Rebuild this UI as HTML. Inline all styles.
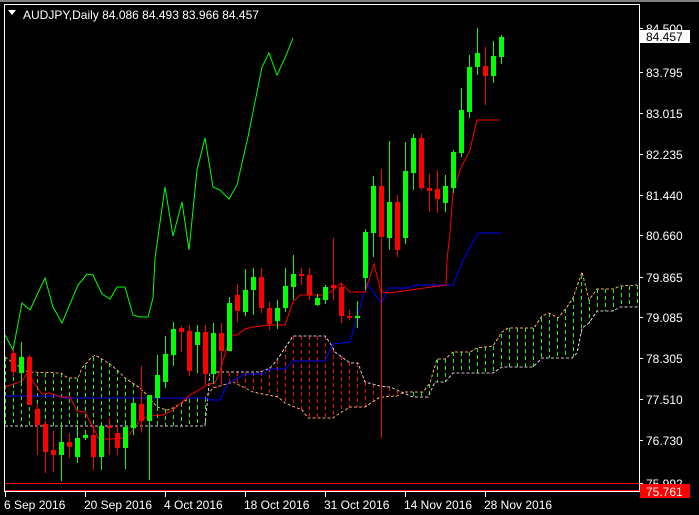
<!DOCTYPE html>
<html><head><meta charset="utf-8"><style>
html,body{margin:0;padding:0;background:#000;width:699px;height:515px;overflow:hidden}
svg{display:block}
text{font-family:"Liberation Sans",sans-serif;font-size:12px;fill:#fff}
</style></head><body>
<svg id="s" width="699" height="515" xmlns="http://www.w3.org/2000/svg">
<rect x="0" y="0" width="699" height="2" fill="#808080"/>
<g id="cloud" shape-rendering="crispEdges"></g>
<g id="lines"></g>
<g id="candles" shape-rendering="crispEdges"></g>
<line x1="5" y1="483.5" x2="639" y2="483.5" stroke="#ff0000"/>
<line x1="5" y1="490.5" x2="639" y2="490.5" stroke="#ff0000"/>
<rect x="4.5" y="4.5" width="635" height="487" fill="none" stroke="#fff"/>
<g id="axis"></g>
<polygon points="8,10 16,10 12,15" fill="#fff"/>
<text x="23" y="19">AUDJPY,Daily  84.086 84.493 83.966 84.457</text>
</svg>
<script>
var NS="http://www.w3.org/2000/svg";
function el(p,t,a){var e=document.createElementNS(NS,t);for(var k in a)e.setAttribute(k,a[k]);document.getElementById(p).appendChild(e);return e;}
function pl(p,pts,c,dash){var a={points:pts.map(function(q){return q[0]+","+q[1]}).join(" "),fill:"none",stroke:c,"stroke-width":1};if(dash)a["stroke-dasharray"]=dash;el(p,"polyline",a);}
function interp(pts,x){if(x<=pts[0][0])return pts[0][1];for(var i=1;i<pts.length;i++){if(x<=pts[i][0]){var a=pts[i-1],b=pts[i];return a[1]+(b[1]-a[1])*(x-a[0])/(b[0]-a[0]||1);}}return pts[pts.length-1][1];}
var A=[[5,357],[12,362],[28,372],[61,373],[68,378],[78,378],[82,368],[90,359],[95,355],[110,364],[117,370],[125,378],[140,388],[147,395],[157,407],[167,410],[173,408],[190,398],[205,398],[213,388],[233,382],[245,388],[253,392],[278,397],[285,403],[302,410],[308,418],[333,418],[340,413],[350,407],[365,407],[380,397],[397,396],[405,392],[423,392],[430,383],[437,359],[445,359],[453,352],[470,352],[477,348],[493,346],[502,332],[508,328],[534,328],[542,316],[549,313],[558,318],[567,307],[573,298],[582,272],[589,300],[597,289],[613,289],[621,286],[637,285]];
var B=[[5,426],[205,426],[210,372],[260,372],[270,368],[277,360],[287,345],[293,336],[325,336],[330,343],[335,352],[350,363],[358,363],[365,382],[380,386],[390,387],[413,397],[428,397],[435,382],[445,382],[453,373],[493,373],[502,367],[533,367],[542,358],[572,358],[577,353],[582,328],[589,323],[597,311],[613,311],[620,307],[637,307]];
for(var x=5;x<=637;x+=8){var a=interp(A,x),b=interp(B,x);if(Math.abs(a-b)<2)continue;var col=a<b?"#00ff00":"#ff0000";var y0=Math.round(Math.min(a,b)),y1=Math.round(Math.max(a,b));for(var y=y0;y<y1;y+=7){el("cloud","rect",{x:x,y:y,width:1,height:Math.min(4,y1-y),fill:col});}}
pl("cloud",A,"#f4a460","3,2");pl("cloud",B,"#d8bfd8","3,2");
pl("lines",[[5,335],[13,350],[22,303],[30,310],[45,278],[53,307],[62,323],[78,285],[87,274],[93,275],[102,294],[110,299],[117,287],[125,287],[133,315],[140,317],[148,317],[153,298],[155,258],[165,187],[173,236],[182,202],[189,250],[197,170],[205,138],[213,187],[220,190],[229,199],[237,185],[248,137],[262,67],[269,53],[277,75],[285,58],[293,38]],"#00ff00");
pl("lines",[[5,396],[61,396],[62,398],[205,398],[210,400],[220,400],[228,383],[245,374],[262,374],[270,369],[285,369],[293,361],[325,361],[333,344],[350,342],[367,283],[381,303],[389,288],[408,288],[417,285],[453,285],[463,260],[478,233],[501,233]],"#0000ff");
pl("lines",[[5,387],[22,381],[28,372],[34,383],[42,394],[50,393],[61,397],[70,397],[77,411],[85,412],[99,439],[110,439],[126,438],[133,430],[140,420],[149,416],[163,415],[173,410],[190,395],[209,384],[215,383],[220,371],[227,347],[232,335],[237,335],[245,329],[253,327],[269,325],[285,325],[293,302],[300,295],[325,295],[333,290],[341,283],[350,292],[365,292],[374,264],[381,292],[389,293],[446,285],[447,260],[450,233],[453,192],[460,170],[470,150],[477,120],[500,120]],"#ff0000");
var C=[[1,'r',353,372,349,376],[2,'g',357,373,342,383],[3,'r',357,405,355,405],[4,'r',409,425,405,455],[5,'r',424,452,420,473],[6,'r',450,455,431,472],[7,'g',442,455,425,481],[8,'r',442,447,433,458],[9,'g',438,457,425,463],[10,'g',435,438,430,440],[11,'r',435,457,425,470],[12,'g',426,457,425,470],[13,'r',426,428,418,455],[14,'r',433,448,425,455],[15,'g',427,448,420,469],[16,'g',403,428,398,435],[17,'r',404,421,366,432],[18,'g',395,421,395,480],[19,'g',375,398,355,410],[20,'g',354,382,336,388],[21,'g',329,355,322,366],[22,'r',328,332,326,352],[23,'r',331,371,325,376],[24,'g',332,345,325,373],[25,'r',332,374,325,385],[26,'g',333,374,323,384],[27,'r',333,351,323,385],[28,'g',303,351,297,350],[29,'r',295,311,284,322],[30,'g',290,312,269,316],[31,'g',277,290,268,315],[32,'r',277,308,268,313],[33,'r',308,324,302,330],[34,'g',308,321,300,329],[35,'g',286,308,268,312],[36,'g',274,287,255,300],[37,'r',274,276,268,285],[38,'r',275,295,268,300],[39,'g',298,305,294,306],[40,'g',287,300,285,304],[41,'r',285,288,238,300],[42,'r',287,316,284,323],[43,'r',316,318,310,320],[44,'g',316,318,301,328],[45,'g',232,278,229,290],[46,'g',186,233,176,257],[47,'r',186,237,169,438],[48,'g',202,238,141,250],[49,'r',202,250,195,257],[50,'g',171,238,142,244],[51,'g',138,173,134,190],[52,'r',138,188,134,190],[53,'r',188,191,174,212],[54,'r',189,199,170,213],[55,'g',186,203,175,212],[56,'g',152,188,150,193],[57,'g',110,153,88,157],[58,'g',67,112,55,118],[59,'g',53,67,28,75],[60,'r',66,76,47,105],[61,'g',56,76,41,83],[62,'g',37,57,35,64]];
C.forEach(function(c){var x=5+8*c[0],col=c[1]=='g'?'#00ff00':'#ff0000';el("candles","line",{x1:x+.5,y1:c[4],x2:x+.5,y2:c[5],stroke:col});el("candles","rect",{x:x-2,y:c[2],width:5,height:Math.max(2,c[3]-c[2]),fill:col});});
var P=[["84.500",28],["83.795",72],["83.015",113],["82.235",154],["81.440",195],["80.660",235],["79.865",277],["79.085",317],["78.305",358],["77.510",399],["76.730",440],["75.992",483]];
P.forEach(function(p){el("axis","line",{x1:639,y1:p[1]+.5,x2:643,y2:p[1]+.5,stroke:"#fff"});var t=el("axis","text",{x:646,y:p[1]+5});t.textContent=p[0];});
el("axis","rect",{x:640,y:30,width:50,height:13,fill:"#fff"});
var t=el("axis","text",{x:646,y:41,style:"fill:#000"});t.textContent="84.457";
el("axis","rect",{x:640,y:484,width:50,height:14,fill:"#ff0000"});
t=el("axis","text",{x:646,y:496});t.textContent="75.761";
var D=[["6 Sep 2016",5],["20 Sep 2016",85],["4 Oct 2016",165],["18 Oct 2016",245],["31 Oct 2016",325],["14 Nov 2016",405],["28 Nov 2016",485]];
D.forEach(function(d){el("axis","line",{x1:d[1]+.5,y1:492,x2:d[1]+.5,y2:497,stroke:"#fff"});var t=el("axis","text",{x:d[1]-1,y:509});t.textContent=d[0];});
</script>
</body></html>
